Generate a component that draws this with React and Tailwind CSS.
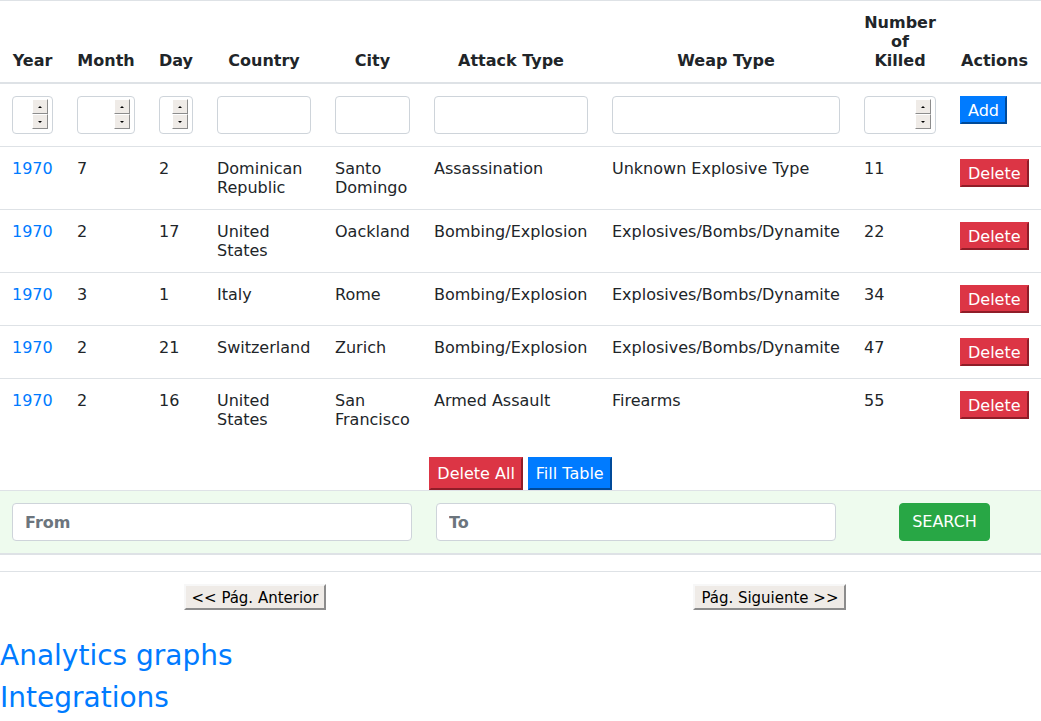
import { useState } from 'react';

const rows = [
  { year: 1970, month: 7, day: 2, country: 'Dominican Republic', city: 'Santo Domingo', attack: 'Assassination', weap: 'Unknown Explosive Type', killed: 11 },
  { year: 1970, month: 2, day: 17, country: 'United States', city: 'Oackland', attack: 'Bombing/Explosion', weap: 'Explosives/Bombs/Dynamite', killed: 22 },
  { year: 1970, month: 3, day: 1, country: 'Italy', city: 'Rome', attack: 'Bombing/Explosion', weap: 'Explosives/Bombs/Dynamite', killed: 34 },
  { year: 1970, month: 2, day: 21, country: 'Switzerland', city: 'Zurich', attack: 'Bombing/Explosion', weap: 'Explosives/Bombs/Dynamite', killed: 47 },
  { year: 1970, month: 2, day: 16, country: 'United States', city: 'San Francisco', attack: 'Armed Assault', weap: 'Firearms', killed: 55 },
];

const headers = ['Year', 'Month', 'Day', 'Country', 'City', 'Attack Type', 'Weap Type', 'Number of Killed', 'Actions'];

const inputClass = 'block w-full h-[38px] px-3 border border-[#ced4da] rounded-[4px] bg-white text-[16px] text-[#495057] outline-none';

const SpinHalf = ({ up }) => (
  <div className="h-[15px] w-[16px] bg-[#efebe7] border border-t-white border-l-white border-b-[#8c8c8c] border-r-[#8c8c8c] flex items-center justify-center">
    <div
      className={
        up
          ? 'w-0 h-0 border-l-[2px] border-r-[2px] border-b-[2px] border-l-transparent border-r-transparent border-b-black'
          : 'w-0 h-0 border-l-[2px] border-r-[2px] border-t-[2px] border-l-transparent border-r-transparent border-t-black'
      }
    />
  </div>
);

const NumberInput = ({ value, onChange }) => (
  <div className="relative">
    <input type="text" value={value} onChange={onChange} className={inputClass} />
    <div className="absolute top-[3px] right-[5px] flex flex-col">
      <SpinHalf up />
      <SpinHalf />
    </div>
  </div>
);

const App = () => {
  const [data, setData] = useState(rows);
  const [form, setForm] = useState({ year: '', month: '', day: '', country: '', city: '', attack: '', weap: '', killed: '' });

  const set = (key) => (e) => setForm((prev) => ({ ...prev, [key]: e.target.value }));

  return (
    <div className="bg-white text-[#212529] text-[16px] leading-[19px]" style={{ fontFamily: '"DejaVu Sans", Verdana, sans-serif' }}>
      <table className="w-full table-fixed border-collapse mb-4">
        <colgroup>
          <col className="w-[65px]" />
          <col className="w-[82px]" />
          <col className="w-[58px]" />
          <col className="w-[118px]" />
          <col className="w-[99px]" />
          <col className="w-[178px]" />
          <col className="w-[252px]" />
          <col className="w-[96px]" />
          <col className="w-[93px]" />
        </colgroup>
        <thead>
          <tr>
            {headers.map((h) => (
              <th key={h} className="p-3 align-bottom text-center font-bold border-t border-b-2 border-[#dee2e6]">
                {h}
              </th>
            ))}
          </tr>
        </thead>
        <tbody>
          <tr>
            <td className="p-3 align-top border-t border-[#dee2e6]"><NumberInput value={form.year} onChange={set('year')} /></td>
            <td className="p-3 align-top border-t border-[#dee2e6]"><NumberInput value={form.month} onChange={set('month')} /></td>
            <td className="p-3 align-top border-t border-[#dee2e6]"><NumberInput value={form.day} onChange={set('day')} /></td>
            <td className="p-3 align-top border-t border-[#dee2e6]"><input value={form.country} onChange={set('country')} className={inputClass} /></td>
            <td className="p-3 align-top border-t border-[#dee2e6]"><input value={form.city} onChange={set('city')} className={inputClass} /></td>
            <td className="p-3 align-top border-t border-[#dee2e6]"><input value={form.attack} onChange={set('attack')} className={inputClass} /></td>
            <td className="p-3 align-top border-t border-[#dee2e6]"><input value={form.weap} onChange={set('weap')} className={inputClass} /></td>
            <td className="p-3 align-top border-t border-[#dee2e6]"><NumberInput value={form.killed} onChange={set('killed')} /></td>
            <td className="p-3 align-top border-t border-[#dee2e6]">
              <button className="h-[28px] px-[6px] bg-[#007bff] text-white border-2 border-[#007bff] border-b-[#004a99] border-r-[#004a99] leading-[19px]">
                Add
              </button>
            </td>
          </tr>
          {data.map((r, i) => (
            <tr key={i}>
              <td className="p-3 align-top border-t border-[#dee2e6] text-[#007bff]">{r.year}</td>
              <td className="p-3 align-top border-t border-[#dee2e6]">{r.month}</td>
              <td className="p-3 align-top border-t border-[#dee2e6]">{r.day}</td>
              <td className="p-3 align-top border-t border-[#dee2e6]">{r.country}</td>
              <td className="p-3 align-top border-t border-[#dee2e6]">{r.city}</td>
              <td className="p-3 align-top border-t border-[#dee2e6]">{r.attack}</td>
              <td className="p-3 align-top border-t border-[#dee2e6]">{r.weap}</td>
              <td className="p-3 align-top border-t border-[#dee2e6]">{r.killed}</td>
              <td className="p-3 align-top border-t border-[#dee2e6]">
                <button
                  onClick={() => setData((prev) => prev.filter((_, j) => j !== i))}
                  className="h-[28px] px-[6px] bg-[#dc3545] text-white border-2 border-[#dc3545] border-b-[#8f1d28] border-r-[#8f1d28] leading-[19px]"
                >
                  Delete
                </button>
              </td>
            </tr>
          ))}
        </tbody>
      </table>

      <div className="flex justify-center gap-[5px]">
        <button
          onClick={() => setData([])}
          className="h-[33px] px-[6px] bg-[#dc3545] text-white border-2 border-[#dc3545] border-b-[#8f1d28] border-r-[#8f1d28] leading-[19px]"
        >
          Delete All
        </button>
        <button
          onClick={() => setData(rows)}
          className="h-[33px] px-[6px] bg-[#007bff] text-white border-2 border-[#007bff] border-b-[#004a99] border-r-[#004a99] leading-[19px]"
        >
          Fill Table
        </button>
      </div>

      <div className="flex items-center bg-[#eefbee] border-t border-b-2 border-[#dee2e6] py-3">
        <input placeholder="From" className="w-[400px] mx-3 h-[38px] px-3 border border-[#ced4da] rounded-[4px] bg-white text-[16px] outline-none placeholder:text-[#6c757d] placeholder:font-bold" />
        <input placeholder="To" className="w-[400px] mx-3 h-[38px] px-3 border border-[#ced4da] rounded-[4px] bg-white text-[16px] outline-none placeholder:text-[#6c757d] placeholder:font-bold" />
        <div className="flex-1 flex justify-center">
          <button className="h-[38px] px-3 bg-[#28a745] text-white rounded-[4px] border border-[#28a745] uppercase leading-[24px]">
            Search
          </button>
        </div>
      </div>

      <div
        className="mt-4 border-t border-[#dee2e6] pt-3 flex justify-around pr-[11px]"
        style={{ fontFamily: '"DejaVu Sans Condensed", "DejaVu Sans", sans-serif' }}
      >
        <button className="h-[26px] px-[6px] bg-[#efebe7] text-black text-[16.67px] border-2 border-t-[#f7f7f7] border-l-[#f7f7f7] border-b-[#8c8c8c] border-r-[#8c8c8c] leading-[19px]">
          &lt;&lt; Pág. Anterior
        </button>
        <button className="h-[26px] px-[6px] bg-[#efebe7] text-black text-[16.67px] border-2 border-t-[#f7f7f7] border-l-[#f7f7f7] border-b-[#8c8c8c] border-r-[#8c8c8c] leading-[19px]">
          Pág. Siguiente &gt;&gt;
        </button>
      </div>

      <div className="mt-[29px]">
        <h3 className="text-[28px] leading-[1.2] mb-2">
          <a href="#analytics" className="text-[#007bff]">Analytics graphs</a>
        </h3>
        <h3 className="text-[28px] leading-[1.2] mb-2">
          <a href="#integrations" className="text-[#007bff]">Integrations</a>
        </h3>
      </div>
    </div>
  );
};

export default App;
